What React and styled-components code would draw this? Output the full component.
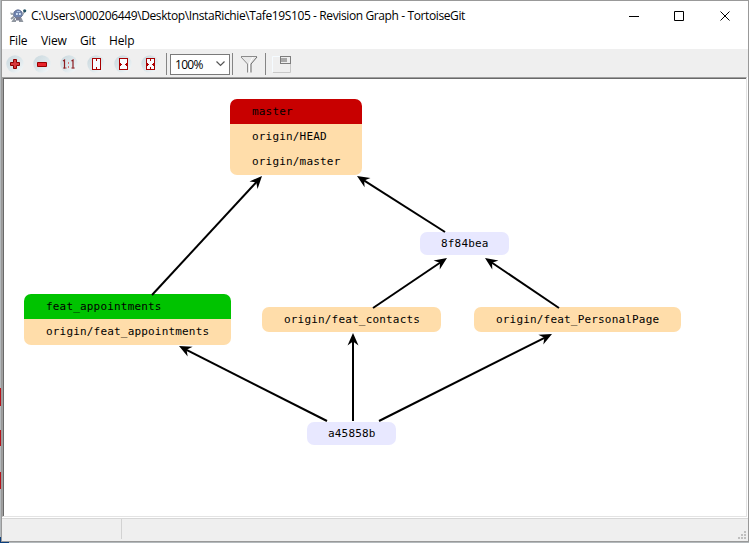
import React from "react";
import styled, { createGlobalStyle } from "styled-components";

const GlobalStyle = createGlobalStyle`
  * { box-sizing: border-box; }
  body { margin: 0; overflow: hidden; background: #b9bfc2; }
`;

const Desktop = styled.div`
  width: 749px;
  height: 543px;
  padding: 0 0 1px 1px;
  background:
    linear-gradient(#b5121b, #b5121b) 0 388px / 1px 18px no-repeat,
    linear-gradient(#b5121b, #b5121b) 0 430px / 1px 16px no-repeat,
    linear-gradient(#b5121b, #b5121b) 0 472px / 1px 17px no-repeat,
    linear-gradient(#0b3f7c, #0b3f7c) 0 537px / 9px 6px no-repeat,
    #b4b9bc;
`;

const Window = styled.div`
  height: 542px;
  display: flex;
  flex-direction: column;
  border: 1px solid #999;
  background: #fff;
  font-family: "Open Sans", "Noto Sans", sans-serif;
  font-size: 12px;
  color: #000;
`;

const TitleBar = styled.header`
  height: 30px;
  flex: none;
  display: flex;
  align-items: center;
  padding-left: 8px;
`;

const Title = styled.span`
  flex: 1;
  padding-left: 4px;
  line-height: 30px;
  white-space: pre;
  letter-spacing: ${(p) => p.$tracking}px;
`;

const WindowButton = styled.button`
  width: ${(p) => p.$width}px;
  height: 29px;
  padding: 0;
  border: 0;
  background: none;
  display: grid;
  place-items: center;
`;

const MenuBar = styled.nav`
  height: 18px;
  flex: none;
  display: flex;
  padding-left: 7px;
  line-height: 19px;
`;

const MenuItem = styled.span`
  width: ${(p) => p.$width}px;
  letter-spacing: -0.15px;
`;

const Toolbar = styled.div`
  height: 28px;
  flex: none;
  display: flex;
  align-items: center;
  background: #efefef;
`;

const ToolButton = styled.span`
  width: 27px;
  height: 28px;
  padding: 6px 5px 4px 4px;
  flex: none;
  line-height: 0;
`;

const ToolGlyph = styled.span`
  height: 22px;
  padding-top: 2px;
  line-height: 0;
`;

const Separator = styled.i`
  width: 1px;
  height: 22px;
  background: #858585;
  margin: 2px ${(p) => p.$after}px 0 ${(p) => p.$before}px;
`;

const ZoomSelect = styled.div`
  width: 60px;
  height: 21px;
  margin-top: 2px;
  padding: 0 4px 0 4px;
  display: flex;
  align-items: center;
  justify-content: space-between;
  border: 1px solid #7a7a7a;
  background: #fff;
  letter-spacing: -0.7px;
`;

const Canvas = styled.main`
  position: relative;
  width: 745px;
  height: 440px;
  flex: none;
  border: 1px solid #a0a0a0;
  border-right-color: #e3e3e3;
  border-bottom-color: #e3e3e3;
  box-shadow: inset 1px 1px #696969;
`;

const Edges = styled.svg`
  position: absolute;
  left: -3px;
  top: -78px;
  pointer-events: none;
`;

const Node = styled.div`
  position: absolute;
  left: ${(p) => p.$x - 3}px;
  top: ${(p) => p.$y - 78}px;
  width: ${(p) => p.$w}px;
  border-radius: 7px;
  overflow: hidden;
  font-family: "DejaVu Sans Mono", monospace;
  font-size: 11px;
  letter-spacing: 0.18px;
`;

const fills = { head: "#c80000", local: "#00c300", remote: "#ffddaa", commit: "#e8e8ff" };

const Ref = styled.div`
  height: ${(p) => p.$h}px;
  line-height: ${(p) => (p.$kind === "commit" ? 24 : 25)}px;
  padding-left: ${(p) => (p.$kind === "commit" ? 21 : 22)}px;
  background: ${(p) => fills[p.$kind]};
  white-space: pre;
`;

const StatusBar = styled.footer`
  flex: 1;
  margin-top: 1px;
  border-top: 1px solid #d7d7d7;
  background: #efefef;
  display: flex;
  justify-content: space-between;
  align-items: flex-end;
`;

const StatusPane = styled.div`
  width: 120px;
  height: 20px;
  align-self: flex-start;
  border-right: 1px solid #d2d2d2;
`;

const windowButtons = [
  { name: "minimize", width: 44, d: "M0 5.5H10" },
  { name: "maximize", width: 46, d: "M.5 .5H9.5V9.5H.5Z" },
  { name: "close", width: 46, d: "M.5 .5L9.5 9.5M9.5 .5L.5 9.5" },
];

const nodes = [
  { x: 230, y: 99, w: 132, refs: [["master", "head", 25], ["origin/HEAD", "remote", 25], ["origin/master", "remote", 26]] },
  { x: 420, y: 232, w: 89, refs: [["8f84bea", "commit", 23]] },
  { x: 24, y: 294, w: 207, refs: [["feat_appointments", "local", 25], ["origin/feat_appointments", "remote", 26]] },
  { x: 262, y: 307, w: 179, refs: [["origin/feat_contacts", "remote", 25]] },
  { x: 474, y: 307, w: 207, refs: [["origin/feat_PersonalPage", "remote", 25]] },
  { x: 307, y: 422, w: 89, refs: [["a45858b", "commit", 23]] },
];

const edges = [
  [152, 295, 262, 176],
  [445, 232, 357, 176],
  [373, 308, 447, 258],
  [559, 308, 485, 258],
  [327, 421, 179, 346],
  [353, 421, 353, 333],
  [379, 421, 552, 334],
];

function Arrow({ points: [x1, y1, x2, y2] }) {
  const angle = (Math.atan2(y2 - y1, x2 - x1) * 180) / Math.PI;
  const length = Math.hypot(x2 - x1, y2 - y1);
  return (
    <g transform={`translate(${x2} ${y2}) rotate(${angle})`}>
      <path d={`M${-length} 0H-4`} stroke="#000" strokeWidth="2" />
      <path d="M0 0L-12.5 -5.5L-8.5 0L-12.5 5.5Z" fill="#000" />
    </g>
  );
}

function TortoiseIcon() {
  return (
    <svg width="17" height="16" viewBox="0 0 17 16">
      <path d="M4 8.5L1 11M5 10L3 13H6M10.5 10L12 13H9" stroke="#8f969f" strokeWidth="1.8" fill="none" />
      <path d="M4 4Q8 -.5 12 4L12.5 7.5L10 10H6L3.5 7.5Z" fill="#6f83ad" stroke="#59678c" strokeWidth=".8" />
      <path d="M6 5H7.8V7H6ZM9 5H10.8V7H9Z" fill="#d3e2f5" />
      <path d="M7 3H10V4H7Z" fill="#a9c0e3" />
      <path d="M6 9H10.5V12.5H6Z" fill="#777b91" />
      <path d="M0 4.5L3 5V7H1Z" fill="#a5adb3" />
      <path d="M12.5 7L14.5 3.5" stroke="#8f98a2" strokeWidth="1.2" />
      <circle cx="14.7" cy="2.8" r="1.6" fill="#245365" />
    </svg>
  );
}

function RoundIcon({ kind }) {
  return (
    <svg width="18" height="18" viewBox="0 0 18 18">
      <defs>
        <linearGradient id="disc" x1="0" y1="0" x2="1" y2="1">
          <stop offset="0" stopColor="#cad8de" />
          <stop offset=".55" stopColor="#dde7eb" />
          <stop offset="1" stopColor="#f7fafb" />
        </linearGradient>
      </defs>
      <circle cx="9" cy="9" r="8.7" fill="url(#disc)" />
      {kind === "plus" && <path d="M7.5 4.5H10.5V7.5H13.5V10.5H10.5V13.5H7.5V10.5H4.5V7.5H7.5Z" fill="#d8383c" stroke="#8b0000" />}
      {kind === "minus" && <path d="M4.5 7.5H13.5V11.5H4.5Z" fill="#e8252d" stroke="#980000" />}
      {kind === "one" && (
        <g fill="none" stroke="#8c1c20">
          <path d="M3 6L4.5 5V13.5M11.5 6L13 5V13.5" strokeWidth="1.2" />
          <path d="M3 13H6.5M11.3 13H14.8" strokeWidth=".8" />
          <path d="M8.5 7V9M8.5 11V13" stroke="#d77478" />
        </g>
      )}
      {["height", "width", "all"].includes(kind) && (
        <g fill="none" stroke="#b00000">
          <rect x="5.5" y="3.5" width="8" height="11" fill="#f9fbff" stroke="#a80000" />
          {kind !== "width" && <path d="M9.5 4V6M9.5 12V14" />}
          {kind !== "height" && <path d="M6 9.5H8M11 9.5H13M6.5 8V11M12.5 8V11" />}
        </g>
      )}
    </svg>
  );
}

export default function App() {
  return (
    <>
      <GlobalStyle />
      <Desktop>
        <Window>
          <TitleBar>
            <TortoiseIcon />
            <Title $tracking={-0.385}>{"C:\\Users\\000206449\\Desktop\\InstaRichie\\Tafe19S105 - Revision Graph - TortoiseGit"}</Title>
            {windowButtons.map(({ name, width, d }) => (
              <WindowButton key={name} $width={width} aria-label={name}>
                <svg width="10" height="10"><path d={d} fill="none" stroke="#000" /></svg>
              </WindowButton>
            ))}
          </TitleBar>
          <MenuBar>
            {[["File", 32], ["View", 39], ["Git", 29], ["Help", 30]].map(([label, width]) => (
              <MenuItem key={label} $width={width}>{label}</MenuItem>
            ))}
          </MenuBar>
          <Toolbar>
            {["plus", "minus", "one", "height", "width", "all"].map((kind) => (
              <ToolButton key={kind}><RoundIcon kind={kind} /></ToolButton>
            ))}
            <Separator $before={2} $after={3} />
            <ZoomSelect>
              100%
              <svg width="9" height="6"><path d="M.5 .5L4.5 4.5L8.5 .5" fill="none" stroke="#555" strokeWidth="1.2" /></svg>
            </ZoomSelect>
            <Separator $before={2} $after={7} />
            <ToolGlyph>
              <svg width="18" height="20" viewBox="0 0 18 20">
                <path d="M1 2.5H17L11 9.5V17L7 19V9.5Z" fill="#e9e9e9" />
                <path d="M1 2.5H17M1 3L7.5 10V18.5" fill="none" stroke="#8b8b8b" />
                <path d="M17 3L11 10V18.5" fill="none" stroke="#686868" />
                <path d="M13 3L9.5 9V18" fill="none" stroke="#fff" />
              </svg>
            </ToolGlyph>
            <Separator $before={7} $after={6} />
            <ToolGlyph>
              <svg width="20" height="20" viewBox="0 0 20 20">
                <path d="M.5 18V2.5H9" stroke="#f5fbff" fill="none" />
                <path d="M1 18.5H18.5V10" stroke="#c8c8c8" fill="none" />
                <rect x="8.5" y="2.5" width="10" height="7" fill="#eee" stroke="#7d7d7d" />
                <rect x="9" y="4" width="6" height="4" fill="#a8a8a8" />
              </svg>
            </ToolGlyph>
          </Toolbar>
          <Canvas>
            {nodes.map((node) => (
              <Node key={`${node.x}-${node.y}`} $x={node.x} $y={node.y} $w={node.w}>
                {node.refs.map(([label, kind, h]) => <Ref key={label} $kind={kind} $h={h}>{label}</Ref>)}
              </Node>
            ))}
            <Edges width="745" height="515">
              {edges.map((points) => <Arrow key={points.join()} points={points} />)}
            </Edges>
          </Canvas>
          <StatusBar>
            <StatusPane />
            <svg width="11" height="11" fill="#bfbfbf">
              {[[6, 0], [3, 3], [6, 3], [0, 6], [3, 6], [6, 6]].map(([x, y]) => (
                <rect key={`${x}${y}`} x={x + 1} y={y + 1} width="2" height="2" />
              ))}
            </svg>
          </StatusBar>
        </Window>
      </Desktop>
    </>
  );
}
